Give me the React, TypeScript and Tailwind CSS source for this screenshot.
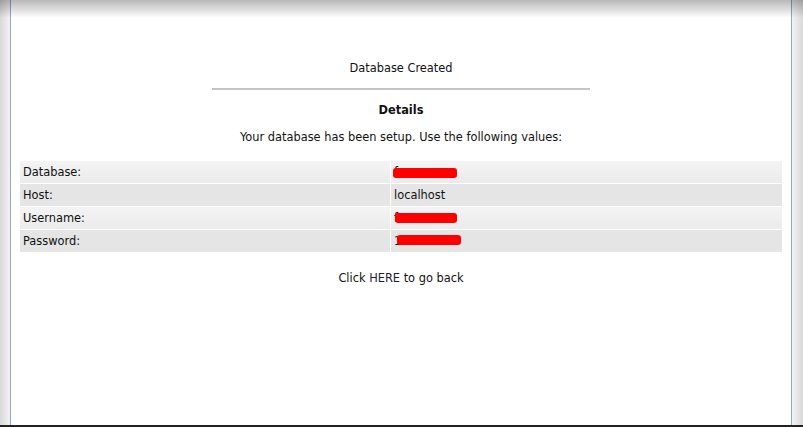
import React from "react";

const rows = [
  { label: "Database:", value: "f", blob: [2, 64, 7], odd: true },
  { label: "Host:", value: "localhost", blob: null, odd: false },
  { label: "Username:", value: "f", blob: [4, 62, 6], odd: true },
  { label: "Password:", value: "1", blob: [6, 64, 5], odd: false },
] as const;

export default function App() {
  return (
    <div className="relative flex h-[427px] w-[803px] flex-col overflow-hidden bg-white text-[11.4px] text-[#111]" style={{ fontFamily: '"DejaVu Sans", Verdana, sans-serif' }}>
      <div className="flex flex-1">
        <div className="w-[10px] bg-gradient-to-r from-[#d9d9d9] to-[#f3f3f3]" />
        <div className="w-px bg-[#8fa8c8]" />
        <main className="flex flex-1 flex-col items-center bg-white px-[8px] pt-[61px]">
          <div className="leading-[14px]">Database Created</div>
          <div className="mt-[13px] h-[2px] w-[378px] bg-[#c4c4c4]" />
          <div className="mt-[13px] font-bold leading-[14px]">Details</div>
          <div className="mt-[13px] leading-[14px]">Your database has been setup. Use the following values:</div>
          <div className="mt-[17px] flex w-[762px] flex-col gap-px">
            {rows.map((r) => (
              <div key={r.label} className="flex h-[22px] gap-px">
                <div className={`flex w-[370px] items-center pl-[3px] pt-px ${r.odd ? "bg-gradient-to-b from-[#f4f4f4] to-[#ebebeb]" : "bg-[#e5e5e5]"}`}>{r.label}</div>
                <div className={`relative flex flex-1 items-center pl-[3px] pt-px ${r.odd ? "bg-gradient-to-b from-[#f4f4f4] to-[#ebebeb]" : "bg-[#e5e5e5]"}`}>
                  {r.value}
                  {r.blob && (
                    <span
                      className="absolute h-[10px] rounded-[3px] bg-[#ff0000]"
                      style={{ left: r.blob[0], width: r.blob[1], top: r.blob[2] }}
                    />
                  )}
                </div>
              </div>
            ))}
          </div>
          <div className="mt-[19px] leading-[14px]">
            Click <span className="text-[#1a1a3a]">HERE</span> to go back
          </div>
        </main>
        <div className="w-px bg-[#8fa8c8]" />
        <div className="w-[11px] bg-gradient-to-l from-[#d9d9d9] to-[#f3f3f3]" />
      </div>
      <div className="h-[2px] bg-[#222]" />
      <div className="pointer-events-none absolute left-0 right-0 top-0 h-[18px] bg-gradient-to-b from-[rgba(0,0,0,0.28)] to-transparent" />
    </div>
  );
}
